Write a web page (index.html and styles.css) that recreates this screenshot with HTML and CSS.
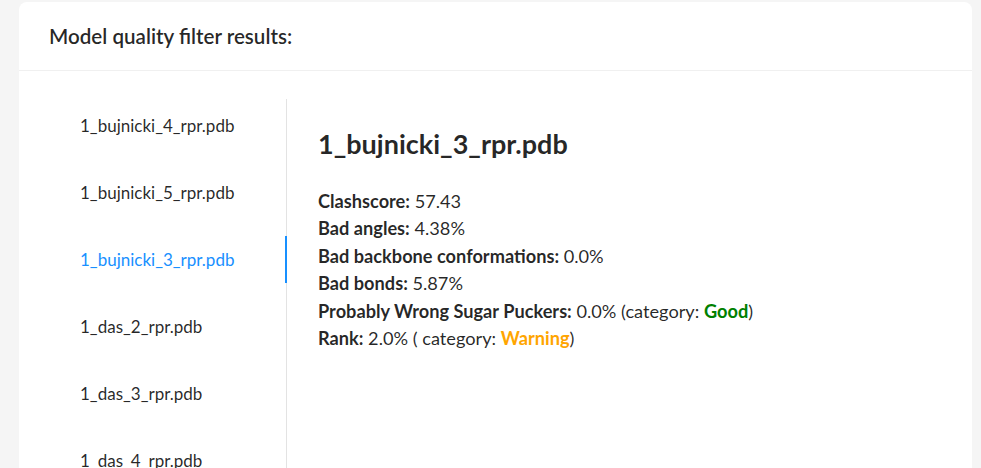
FILE: index.html
```html
<!DOCTYPE html>
<html lang="en">
<head>
<meta charset="utf-8">
<title>Model quality filter results</title>
<link rel="stylesheet" href="styles.css">
</head>
<body>
<div class="card">
  <div class="card-head">Model quality filter results:</div>
  <div class="card-body">
    <div class="tabs-nav">
      <div class="tab">1_bujnicki_4_rpr.pdb</div>
      <div class="tab">1_bujnicki_5_rpr.pdb</div>
      <div class="tab active">1_bujnicki_3_rpr.pdb</div>
      <div class="tab">1_das_2_rpr.pdb</div>
      <div class="tab">1_das_3_rpr.pdb</div>
      <div class="tab">1_das_4_rpr.pdb</div>
    </div>
    <div class="tab-content">
      <h2 class="model-title">1_bujnicki_3_rpr.pdb</h2>
      <div class="stats">
        <div><b>Clashscore:</b> 57.43</div>
        <div><b>Bad angles:</b> 4.38%</div>
        <div><b>Bad backbone conformations:</b> 0.0%</div>
        <div><b>Bad bonds:</b> 5.87%</div>
        <div><b>Probably Wrong Sugar Puckers:</b> 0.0% (category: <b class="good">Good</b>)</div>
        <div><b>Rank:</b> 2.0% ( category: <b class="warning">Warning</b>)</div>
      </div>
    </div>
  </div>
</div>
</body>
</html>
```
FILE: styles.css
```css
html, body {
  margin: 0;
  padding: 0;
  height: 100%;
  overflow: hidden;
}
body {
  background: #f5f5f5;
  font-family: Lato, "Open Sans", sans-serif;
  color: rgba(0, 0, 0, 0.85);
}
.card {
  margin: 2px 9px 0 19px;
  background: #fff;
  border-radius: 8px 8px 0 0;
  height: 600px;
}
.card-head {
  height: 69px;
  box-sizing: border-box;
  padding-left: 30px;
  display: flex;
  align-items: center;
  font-size: 20.6px;
  font-weight: 600;
  border-bottom: 1px solid #f0f0f0;
}
.card-body {
  display: flex;
  padding-top: 28px;
}
.tabs-nav {
  width: 267px;
  flex: none;
  border-right: 1px solid #e3e3e3;
  display: flex;
  flex-direction: column;
  gap: 20px;
  padding-top: 3px;
  height: 500px;
}
.tab {
  position: relative;
  height: 47px;
  display: flex;
  align-items: center;
  padding-left: 61px;
  font-size: 17px;
}
.tab.active {
  color: #1890ff;
}
.tab.active::after {
  content: "";
  position: absolute;
  right: -1px;
  top: 0;
  bottom: 0;
  width: 2px;
  background: #1890ff;
}
.tab-content {
  padding-left: 31px;
  padding-top: 29px;
}
.model-title {
  margin: 0;
  font-size: 27px;
  font-weight: 700;
  line-height: 32px;
}
.stats {
  margin-top: 28px;
  font-size: 18.2px;
  line-height: 27.4px;
}
.stats b {
  font-weight: 700;
}
.good {
  color: #008000;
}
.warning {
  color: #ffa500;
}
```
